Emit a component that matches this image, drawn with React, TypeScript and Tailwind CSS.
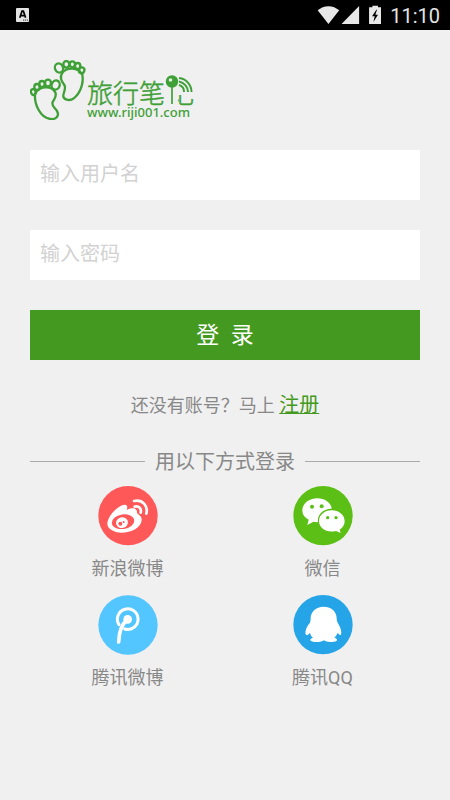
import React, { useState } from "react";

const StatusBar: React.FC = () => (
  <div className="flex h-[30px] items-center justify-between bg-black pl-4 pr-[10px] text-[#e4e4e4]">
    <svg viewBox="0 0 14 16" className="h-4 w-[14px]" aria-hidden="true">
      <rect x="0" y="1" width="13" height="14" rx="1" fill="#e4e4e4" />
      <path d="M3.8 10.8 6 4.2h1.4l2.2 6.6M4.6 8.6h4.2" fill="none" stroke="#000" strokeWidth="1.7" />
      <path d="M7 13.1h5" stroke="#333" strokeWidth="1" strokeDasharray="1.2 0.7" />
    </svg>
    <div className="flex items-center">
      <svg viewBox="50 15 196 60" className="h-5 w-[65px]" fill="#e8e8e8" aria-hidden="true">
        <path d="M52 31C70 14 99 14 117 31L84.500 72Z" />
        <path d="M177 18V72H124Z" />
        <path d="M217 17h17v5h9v50h-36V22h10Z" />
        <path d="M229 29 216 49h8l-4 17 14-22h-8l5-15Z" fill="#000" />
      </svg>
      <span className="ml-2 pt-px text-xl leading-[30px]">11:10</span>
    </div>
  </div>
);

const Logo: React.FC = () => (
  <svg viewBox="0 0 164 60" className="h-[60px] w-[164px]" role="img" aria-label="旅行笔记">
    <g transform="scale(0.33333) translate(-30 -30)" fill="none" stroke="#3fa037" strokeWidth="7" strokeLinejoin="round">
      <path d="M126 70C118 83 125 95 133 105C140 116 128 130 130 140C133 151 151 153 161 145C179 132 192 102 187 74C175 50 139 51 126 70Z" />
      <ellipse cx="117" cy="54" rx="12" ry="14" transform="rotate(-25 117 54)" />
      <ellipse cx="139" cy="43" rx="9" ry="10" />
      <ellipse cx="157" cy="43" rx="8" ry="9" />
      <ellipse cx="173" cy="48" rx="8" ry="9" />
      <ellipse cx="185" cy="61" rx="8" ry="9" transform="rotate(20 185 61)" />
      <path d="M45 132C43 164 61 203 91 207C108 209 118 198 112 185C107 174 93 169 98 156C103 146 111 140 106 127C93 105 57 108 45 132Z" />
      <ellipse cx="107" cy="105" rx="12" ry="14" transform="rotate(20 107 105)" />
      <ellipse cx="84" cy="99" rx="9" ry="10" />
      <ellipse cx="66" cy="102" rx="8" ry="9" />
      <ellipse cx="51" cy="111" rx="8" ry="9" />
      <ellipse cx="40" cy="126" rx="7" ry="9" transform="rotate(-15 40 126)" />
    </g>
    <clipPath id="logo-tail">
      <rect x="148" y="35" width="18" height="14" />
    </clipPath>
    <g fill="#3fa037" stroke="#3fa037" strokeWidth="0.500" className="font-['Noto_Sans_CJK_SC',sans-serif] font-light">
      <text x="57" y="43" fontSize="26">旅行笔</text>
      <text x="138" y="43" fontSize="26" clipPath="url(#logo-tail)">记</text>
    </g>
    <g fill="none" stroke="#3fa037">
      <path d="M142 21V44" strokeWidth="1.7" />
      <path d="M149 25a7 7 0 0 1 5 7M149 21.500a11 11 0 0 1 9 10.500M149 18a14 14 0 0 1 12.500 14" strokeWidth="2" />
    </g>
    <circle cx="142" cy="21.500" r="6.200" fill="#3fa037" />
    <circle cx="140.500" cy="20" r="1.800" fill="#e7f3e5" />
    <text x="57" y="57" fontSize="13" fill="#3fa037" className="font-['Noto_Sans',sans-serif] font-medium">
      www.riji001.com
    </text>
  </svg>
);

const WeiboIcon = () => (
  <svg viewBox="23 18 180 180" className="size-[60px]" aria-hidden="true">
    <circle cx="113" cy="107" r="89" fill="#ff5858" />
    <path d="M99 75C113 72 112 83 109 90C122 82 141 82 140 97C139 103 153 104 154 118C155 142 123 158 93 158C70 157 50 146 51 130C53 107 82 78 99 75Z" fill="#fff" />
    <ellipse cx="98" cy="125" rx="34" ry="22" fill="#ff5858" transform="rotate(-8 98 125)" />
    <ellipse cx="95" cy="128" rx="18" ry="16" fill="#fff" transform="rotate(-15 95 128)" />
    <circle cx="90" cy="131" r="6" fill="#ff5858" />
    <circle cx="100" cy="126" r="3" fill="#ff5858" />
    <path d="M131 63C156 57 174 77 168 101M133 80C146 77 154 86 151 98" fill="none" stroke="#fff" strokeWidth="8" strokeLinecap="round" />
  </svg>
);

const WechatIcon = () => (
  <svg viewBox="23 17 180 180" className="size-[60px]" aria-hidden="true">
    <circle cx="113" cy="106" r="89" fill="#5bbf15" />
    <path d="M95 54C120 54 138 69 139 85C112 85 95 104 98 125C95 126 89 125 84 124L66 134L70 118C57 111 51 101 51 91C51 70 71 54 95 54Z" fill="#fff" />
    <path d="M139 90C161 90 178 104 178 123C178 134 172 142 163 148L166 158L152 152C124 159 101 144 101 123C101 104 118 90 139 90Z" fill="#fff" />
    <g fill="#5bbf15">
      <circle cx="80" cy="79" r="6" />
      <circle cx="109" cy="78" r="6" />
      <circle cx="127" cy="112" r="5" />
      <circle cx="152" cy="112" r="5" />
    </g>
  </svg>
);

const TencentWeiboIcon = () => (
  <svg viewBox="23 19 180 180" className="size-[60px]" aria-hidden="true">
    <circle cx="113" cy="109" r="89" fill="#53c5ff" />
    <path d="M86 108A31 31 0 1 1 103 121" fill="none" stroke="#fff" strokeWidth="9" strokeLinecap="round" />
    <circle cx="112" cy="92" r="13" fill="#fff" />
    <path d="M110 94C93 108 86 133 85 160" fill="none" stroke="#fff" strokeWidth="11" strokeLinecap="round" />
  </svg>
);

const QQIcon = () => (
  <svg viewBox="23 19 180 180" className="size-[60px]" aria-hidden="true">
    <circle cx="113" cy="108" r="89" fill="#25a5e8" />
    <path d="M115 54C140 54 154 70 154 89C154 95 155 98 157 102C166 116 170 129 167 138C164 141 160 136 157 132C155 138 151 143 147 147C160 151 158 159 139 160C128 161 121 158 116 155C110 159 101 161 89 160C72 158 71 151 83 147C78 143 75 138 74 132C69 138 64 142 61 137C58 127 65 112 74 102C75 97 76 94 76 89C76 70 91 54 115 54Z" fill="#fff" />
  </svg>
);

const providers = [
  { name: "新浪微博", icon: WeiboIcon },
  { name: "微信", icon: WechatIcon },
  { name: "腾讯微博", icon: TencentWeiboIcon },
  { name: "腾讯QQ", icon: QQIcon },
];

const LoginForm: React.FC = () => {
  const [username, setUsername] = useState("");
  const [password, setPassword] = useState("");

  const inputClass =
    "block h-[50px] w-full bg-white px-[10px] pb-[2px] text-xl text-[#555] outline-none placeholder:text-[#d2d2d2]";

  return (
    <form onSubmit={(e) => e.preventDefault()} className="mt-[30px] flex flex-col gap-[30px]">
      <input
        type="text"
        aria-label="用户名"
        placeholder="输入用户名"
        value={username}
        onChange={(e) => setUsername(e.target.value)}
        className={inputClass}
      />
      <input
        type="password"
        aria-label="密码"
        placeholder="输入密码"
        value={password}
        onChange={(e) => setPassword(e.target.value)}
        className={inputClass}
      />
      <button type="submit" className="h-[50px] w-full whitespace-pre bg-[#449a20] pt-[2px] text-[23px] text-white">
        {"登  录"}
      </button>
    </form>
  );
};

const App: React.FC = () => {
  return (
    <div className="min-h-screen bg-[#f0f0f0] font-[Roboto,'Noto_Sans_CJK_SC',sans-serif] text-[#888]">
      <StatusBar />
      <main className="px-[30px] pt-[30px]">
        <Logo />
        <LoginForm />
        <p className="mt-[31px] text-center text-lg leading-[30px]">
          还没有账号？马上{" "}
          <a href="#register" className="text-xl leading-5 text-[#449a20] underline decoration-1 underline-offset-1">
            注册
          </a>
        </p>
        <div className="mt-[25px] flex items-center gap-[10px]">
          <span className="h-px flex-1 bg-[#aaa]" />
          <h2 className="pt-[2px] text-xl leading-7">用以下方式登录</h2>
          <span className="h-px flex-1 bg-[#aaa]" />
        </div>
        <div className="mt-[10px] grid grid-cols-2 gap-y-[15px]">
          {providers.map(({ name, icon: Icon }) => (
            <button key={name} type="button" className="flex flex-col items-center gap-3 text-lg leading-[22px]">
              <Icon />
              {name}
            </button>
          ))}
        </div>
      </main>
    </div>
  );
};

export default App;
